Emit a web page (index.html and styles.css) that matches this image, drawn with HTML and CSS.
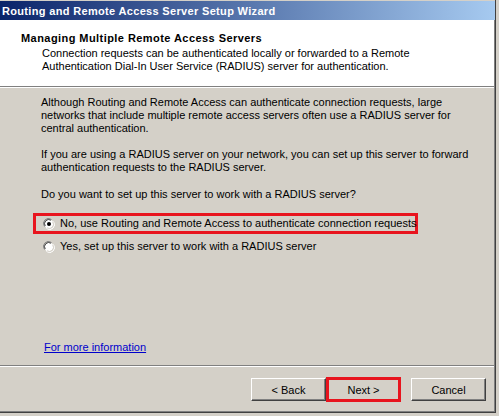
FILE: index.html
```html
<!DOCTYPE html>
<html>
<head>
<meta charset="utf-8">
<link rel="stylesheet" href="styles.css">
</head>
<body>
<div class="window">
  <div class="titlebar">Routing and Remote Access Server Setup Wizard</div>
  <div class="header">
    <div class="heading">Managing Multiple Remote Access Servers</div>
    <div class="subtext">Connection requests can be authenticated locally or forwarded to a Remote<br>Authentication Dial-In User Service (RADIUS) server for authentication.</div>
  </div>
  <div class="sep"></div>
  <div class="content">
    <p class="para">Although Routing and Remote Access can authenticate connection requests, large<br>networks that include multiple remote access servers often use a RADIUS server for<br>central authentication.</p>
    <p class="para">If you are using a RADIUS server on your network, you can set up this server to forward<br>authentication requests to the RADIUS server.</p>
    <p class="para">Do you want to set up this server to work with a RADIUS server?</p>
    <div class="options">
      <div class="option highlighted">
        <svg class="radio" width="12" height="12" viewBox="0 0 12 12">
          <path d="M1.5 8.5 A5 5 0 0 1 8.5 1.5" fill="none" stroke="#808080" stroke-width="1"/>
          <path d="M10.5 3.5 A5 5 0 0 1 3.5 10.5" fill="none" stroke="#ffffff" stroke-width="1"/>
          <circle cx="6" cy="6" r="4.5" fill="#ffffff" stroke="none"/>
          <path d="M2.2 8 A4.2 4.2 0 0 1 8 2.2" fill="none" stroke="#404040" stroke-width="1"/>
          <path d="M9.8 4 A4.2 4.2 0 0 1 4 9.8" fill="none" stroke="#d4d0c8" stroke-width="1"/>
          <circle cx="6" cy="6" r="2" fill="#000"/>
        </svg>
        <span>No, use Routing and Remote Access to authenticate connection requests</span>
      </div>
      <div class="option plain">
        <svg class="radio" width="12" height="12" viewBox="0 0 12 12">
          <path d="M1.5 8.5 A5 5 0 0 1 8.5 1.5" fill="none" stroke="#808080" stroke-width="1"/>
          <path d="M10.5 3.5 A5 5 0 0 1 3.5 10.5" fill="none" stroke="#ffffff" stroke-width="1"/>
          <circle cx="6" cy="6" r="4.5" fill="#ffffff" stroke="none"/>
          <path d="M2.2 8 A4.2 4.2 0 0 1 8 2.2" fill="none" stroke="#404040" stroke-width="1"/>
          <path d="M9.8 4 A4.2 4.2 0 0 1 4 9.8" fill="none" stroke="#d4d0c8" stroke-width="1"/>
        </svg>
        <span>Yes, set up this server to work with a RADIUS server</span>
      </div>
    </div>
    <div class="spacer"></div>
    <a class="link" href="#">For more information</a>
  </div>
  <div class="sep"></div>
  <div class="footer">
    <button class="btn">&lt; Back</button>
    <button class="btn btn-next">Next &gt;</button>
    <button class="btn btn-cancel">Cancel</button>
  </div>
</div>
</body>
</html>
```

FILE: styles.css
```css
html, body {
  margin: 0;
  padding: 0;
}
body {
  background: #d4d0c8;
  font-family: "Liberation Sans", Arial, sans-serif;
  font-size: 11px;
  line-height: 13px;
  color: #000;
  width: 499px;
  height: 416px;
  overflow: hidden;
}
.window {
  width: 496px;
  height: 413px;
  box-sizing: border-box;
  background: #d4d0c8;
  border-right: 1px solid #404040;
  border-bottom: 1px solid #404040;
  box-shadow: inset -1px -1px 0 #808080;
  display: flex;
  flex-direction: column;
}
.titlebar {
  height: 20px;
  box-sizing: border-box;
  padding: 3px 0 0 2px;
  background: linear-gradient(to right, #0a246a, #a6caf0);
  color: #fff;
  font-weight: bold;
  font-size: 11px;
  line-height: 14px;
  letter-spacing: 0.33px;
  border-top: 1px solid #d4d0c8;
  white-space: nowrap;
}
.header {
  height: 66px;
  box-sizing: border-box;
  background: #fff;
  margin-right: 1px;
  padding: 12px 0 0 21px;
}
.heading {
  font-weight: bold;
  letter-spacing: 0.44px;
}
.subtext {
  margin-top: 2px;
  padding-left: 21px;
}
.sep {
  height: 1px;
  border-bottom: 1px solid #fff;
  background: #808080;
  margin-right: 1px;
  flex: none;
}
.content {
  height: 277px;
  box-sizing: border-box;
  padding: 8px 0 0 41px;
  display: flex;
  flex-direction: column;
  align-items: flex-start;
}
.para {
  margin: 0 0 13px 0;
}
.para:nth-child(2) {
  margin-bottom: 14px;
}
.options {
  margin-left: -8px;
  margin-top: -1px;
  display: flex;
  flex-direction: column;
}
.option {
  display: flex;
  align-items: center;
  gap: 5px;
  white-space: nowrap;
}
.option.highlighted {
  border: 3px solid #e8141e;
  width: 385px;
  height: 21px;
  box-sizing: border-box;
  padding-left: 7px;
}
.option.plain {
  margin-top: 2px;
  padding-left: 10px;
  height: 21px;
}
.radio {
  flex: none;
}
.spacer {
  flex: 1;
}
.link {
  color: #0000cc;
  text-decoration: underline;
  margin-left: 3px;
  margin-bottom: 11px;
}
.footer {
  flex: 1;
  display: flex;
  align-items: flex-start;
  padding: 11px 0 0 251px;
}
.btn {
  font-family: "Liberation Sans", Arial, sans-serif;
  font-size: 11px;
  color: #000;
  width: 75px;
  height: 23px;
  margin: 0;
  padding: 0;
  background: #d4d0c8;
  border: 1px solid;
  border-color: #fff #404040 #404040 #fff;
  box-shadow: inset -1px -1px 0 #808080;
  box-sizing: border-box;
}
.btn-next {
  border: 3px solid #e8141e;
  box-shadow: none;
  margin-top: -1px;
  height: 25px;
}
.btn-cancel {
  margin-left: 10px;
}
```
